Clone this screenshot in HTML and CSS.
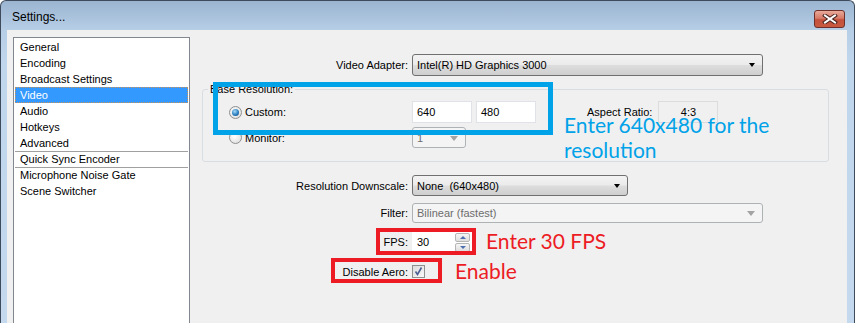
FILE: index.html
```html
<!DOCTYPE html>
<html lang="en">
<head>
    <meta charset="UTF-8">
    <title>Settings...</title>
    <link rel="stylesheet" href="styles.css">
</head>
<body>
<div class="window">
    <div class="titlebar">
        <span class="title">Settings...</span>
        <div class="close">
            <svg width="16" height="10" viewBox="0 0 16 10">
                <path d="M3 1.5 L13 8.5 M13 1.5 L3 8.5" stroke="#4b2520" stroke-width="4" stroke-linecap="square"/>
                <path d="M3 1.5 L13 8.5 M13 1.5 L3 8.5" stroke="#ffffff" stroke-width="2" stroke-linecap="square"/>
            </svg>
        </div>
    </div>
    <div class="frame">
        <div class="client">
            <ul class="nav">
                <li>General</li>
                <li>Encoding</li>
                <li>Broadcast Settings</li>
                <li class="active">Video</li>
                <li>Audio</li>
                <li>Hotkeys</li>
                <li>Advanced</li>
                <li class="sep">Quick Sync Encoder</li>
                <li class="sep">Microphone Noise Gate</li>
                <li>Scene Switcher</li>
            </ul>

            <div class="panel">
                <div class="row r-adapter">
                    <span class="lbl">Video Adapter:</span>
                    <div class="combo w-adapter">Intel(R) HD Graphics 3000<i class="arrow"></i></div>
                </div>

                <div class="group">
                    <span class="legend">Base Resolution:</span>
                    <div class="grow r-custom">
                        <span class="opt"><i class="radio on"></i>Custom:</span>
                        <div class="edit w-res">640</div>
                        <div class="edit w-res gap">480</div>
                        <span class="aspect-lbl">Aspect Ratio:</span>
                        <div class="aspect">4:3</div>
                    </div>
                    <div class="grow r-monitor">
                        <span class="opt"><i class="radio"></i>Monitor:</span>
                        <div class="combo off w-monitor">1<i class="arrow"></i></div>
                    </div>
                </div>

                <div class="row r-downscale">
                    <span class="lbl">Resolution Downscale:</span>
                    <div class="combo w-down">None&nbsp; (640x480)<i class="arrow"></i></div>
                </div>

                <div class="row r-filter">
                    <span class="lbl">Filter:</span>
                    <div class="combo off w-adapter">Bilinear (fastest)<i class="arrow"></i></div>
                </div>

                <div class="row r-fps">
                    <span class="lbl">FPS:</span>
                    <div class="edit spin">30
                        <div class="spinbtns">
                            <span class="sb up"></span>
                            <span class="sb down"></span>
                        </div>
                    </div>
                </div>

                <div class="row r-aero">
                    <span class="lbl">Disable Aero:</span>
                    <span class="check">
                        <svg width="11" height="11" viewBox="0 0 11 11">
                            <path d="M2.5 5.5 L4.5 8.5 L8.5 1.5" fill="none" stroke="#4c5f93" stroke-width="1.6"/>
                        </svg>
                    </span>
                </div>
            </div>
        </div>
    </div>

    <!-- annotations drawn over the dialog -->
    <div class="mark mark-res"></div>
    <div class="note note-res">Enter 640x480 for the<br>resolution</div>
    <div class="mark red mark-fps"></div>
    <div class="note red-text note-fps">Enter 30 FPS</div>
    <div class="mark red mark-aero"></div>
    <div class="note red-text note-aero">Enable</div>
</div>
</body>
</html>
```

FILE: styles.css
```css
body {
    margin: 0;
    font-family: "Liberation Sans", Arial, sans-serif;
    font-size: 11px;
    color: #000;
}

.window {
    position: relative;
    width: 855px;
    height: 323px;
    box-sizing: border-box;
    border: 1px solid #3d4b5c;
    border-bottom: none;
    border-radius: 6px 6px 0 0;
    background: linear-gradient(#9bb4d0, #b6cee6 29px, #c0d6ec 60px, #c4d9ee);
    overflow: hidden;
}

.titlebar {
    height: 29px;
    display: flex;
    justify-content: space-between;
    align-items: flex-start;
    padding: 0 9px 0 11px;
}

.title {
    margin-top: 9px;
    font-size: 12px;
    line-height: 15px;
}

.close {
    margin-top: 9px;
    width: 31px;
    height: 18px;
    box-sizing: border-box;
    border: 1px solid #6e2f2a;
    border-radius: 3px;
    background: linear-gradient(#e9a999, #d67a68 45%, #c4503c 55%, #c85a40);
    display: flex;
    align-items: center;
    justify-content: center;
}

.frame {
    padding: 0 7px 0 6px;
}

.client {
    height: 300px;
    background: #f0f0f0;
    display: flex;
    align-items: flex-start;
    padding: 7px 0 0 6px;
}

/* left list */
.nav {
    list-style: none;
    margin: 0;
    padding: 1px 0;
    width: 177px;
    height: 300px;
    box-sizing: border-box;
    border: 1px solid #828790;
    background: #fff;
    flex: none;
}

.nav li {
    margin: 0 1px;
    padding-left: 5px;
    height: 16px;
    line-height: 16px;
    white-space: nowrap;
}

.nav li.sep {
    border-top: 1px solid #a0a0a0;
    height: 15px;
    line-height: 15px;
}

.nav li.active {
    background: #3399ff;
    color: #fff;
    box-sizing: border-box;
    outline: 1px dotted #c8915a;
    outline-offset: -1px;
}

/* right side */
.panel {
    margin-left: 12px;
    padding-top: 17px;
}

.row {
    display: flex;
    align-items: center;
}

.lbl {
    width: 206px;
    margin-right: 4px;
    text-align: right;
    white-space: nowrap;
}

.r-adapter { height: 22px; }
.r-downscale { height: 21px; margin-top: 13px; }
.r-filter { height: 20px; margin-top: 7px; }
.r-fps { height: 22px; margin-top: 8px; }
.r-aero { height: 13px; margin-top: 12px; }

.combo {
    position: relative;
    height: 100%;
    box-sizing: border-box;
    border: 1px solid #707070;
    border-radius: 3px;
    background: linear-gradient(#f3f3f3, #ebebeb 48%, #dddddd 52%, #cfcfcf);
    padding-left: 4px;
    display: flex;
    align-items: center;
    white-space: nowrap;
}

.combo.off {
    border-color: #adb2b5;
    background: #f4f4f4;
    color: #6d6d6d;
}

.arrow {
    position: absolute;
    right: 7px;
    top: 50%;
    margin-top: -2px;
    width: 0;
    height: 0;
    border-left: 3.5px solid transparent;
    border-right: 3.5px solid transparent;
    border-top: 4px solid #000;
}

.combo.off .arrow {
    border-top-color: #a3a3a3;
    border-left-width: 4.5px;
    border-right-width: 4.5px;
    border-top-width: 5px;
}

.w-adapter { width: 351px; }
.w-down { width: 216px; }
.w-monitor { width: 54px; color: #a0a0a0; }

.edit {
    height: 100%;
    box-sizing: border-box;
    border: 1px solid #dfe3e8;
    background: #fff;
    padding-left: 4px;
    display: flex;
    align-items: center;
}

.w-res { width: 60px; }
.gap { margin-left: 4px; }

.spin {
    position: relative;
    width: 60px;
    border-color: #fff;
}

.spinbtns {
    position: absolute;
    right: 1px;
    top: 1px;
    display: flex;
    flex-direction: column;
    gap: 1px;
}

.sb {
    position: relative;
    width: 15px;
    height: 9px;
    box-sizing: border-box;
    border: 1px solid #b5b5b5;
    border-radius: 2px;
    background: linear-gradient(#f6f6f6, #dedede);
}

.sb::after {
    content: "";
    position: absolute;
    left: 4px;
    top: 2px;
    border-left: 3px solid transparent;
    border-right: 3px solid transparent;
}

.sb.up::after { border-bottom: 3px solid #4d6fb0; }
.sb.down::after { border-top: 3px solid #4d6fb0; }

/* group box */
.group {
    margin-top: 13px;
    width: 627px;
    box-sizing: border-box;
    border: 1px solid #d8dde2;
    border-radius: 3px;
    padding: 0 0 13px 26px;
}

.legend {
    display: block;
    width: fit-content;
    margin: -7px 0 0 -21px;
    padding: 0 2px;
    line-height: 13px;
    background: #f0f0f0;
}

.grow {
    display: flex;
    align-items: center;
}

.r-custom { height: 22px; margin-top: 5px; }
.r-monitor { height: 21px; margin-top: 4px; }

.opt {
    width: 183px;
    display: flex;
    align-items: center;
}

.radio {
    width: 13px;
    height: 13px;
    box-sizing: border-box;
    border-radius: 50%;
    border: 1px solid #8e8f8f;
    background: radial-gradient(circle at 40% 40%, #ffffff, #e4e4e4 70%, #cfcfcf);
    margin-right: 3px;
    position: relative;
}

.radio.on::after {
    content: "";
    position: absolute;
    left: 2px;
    top: 2px;
    width: 7px;
    height: 7px;
    border-radius: 50%;
    background: radial-gradient(circle at 40% 35%, #a8dcf8, #2a7ec0 55%, #123e6b);
}

.aspect-lbl {
    margin-left: 51px;
}

.aspect {
    margin-left: 6px;
    width: 60px;
    height: 22px;
    box-sizing: border-box;
    border: 1px solid #dcdcdc;
    text-align: center;
    line-height: 20px;
}

.check {
    width: 13px;
    height: 13px;
    box-sizing: border-box;
    border: 1px solid #8e8f8f;
    background: linear-gradient(135deg, #dcdcdc, #f8f8f8);
    display: flex;
    align-items: center;
    justify-content: center;
}

/* annotations */
.mark {
    position: absolute;
    box-sizing: border-box;
    border: 5px solid #00a2e8;
}

.mark.red {
    border: 4px solid #ed1c24;
}

.mark-res { left: 212px; top: 81px; width: 340px; height: 53px; }
.mark-fps { left: 375px; top: 227px; width: 100px; height: 27px; }
.mark-aero { left: 330px; top: 257px; width: 111px; height: 25px; }

.note {
    position: absolute;
    font-family: Lato, "Open Sans", sans-serif;
    font-size: 21px;
    line-height: 25px;
    color: #00a2e8;
    white-space: nowrap;
}

.red-text { color: #ed1c24; }

.note-res { left: 563px; top: 111px; }
.note-fps { left: 485px; top: 227px; }
.note-aero { left: 454px; top: 257px; }
```
